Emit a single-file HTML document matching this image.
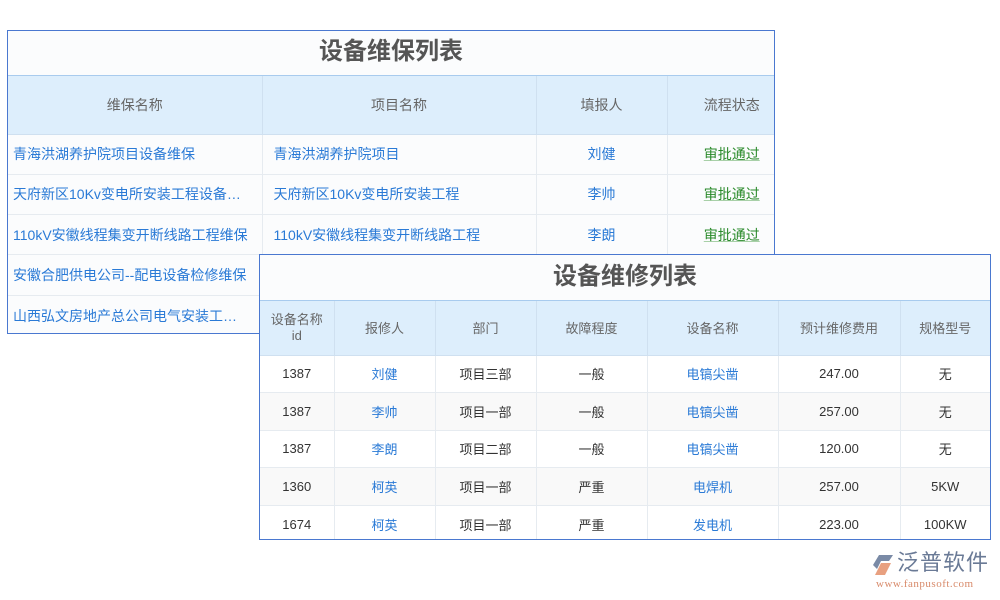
<!DOCTYPE html>
<html><head><meta charset="utf-8"><style>
*{margin:0;padding:0;box-sizing:border-box}
body{width:1000px;height:600px;background:#fff;position:relative;overflow:hidden;font-family:"Liberation Sans","Noto Sans CJK SC",sans-serif;font-size:14px}
.box{position:absolute;border:1px solid #4a78d0;background:#fbfcfd;overflow:hidden}
.title{position:absolute;left:0;right:0;text-align:center;font-weight:bold;color:#555;font-size:24px;border-bottom:1px solid #a8cbee}
table{position:absolute;left:0;border-collapse:collapse;table-layout:fixed}
td,th{border:1px solid #e6ebf0;white-space:nowrap;overflow:hidden;text-overflow:ellipsis}
th{background:#ddeefc;font-weight:normal;color:#666;border-color:#cfe0f0}
tr:first-child th{border-top:none}
td:first-child,th:first-child{border-left:none}
td:last-child,th:last-child{border-right:none}
tr:last-child td{border-bottom:none}
#t1 td{height:40.3px;background:#fbfcfd}
#t1 td:first-child,#t1 td:nth-child(2){padding-right:12px}
#t1 td:last-child,#t1 th:last-child{padding-left:22px;padding-right:0}
#t2 td{height:37.5px;text-align:center;color:#333;font-size:13px}
#t2 th{font-size:13px}
#t2 tr:nth-child(odd) td{background:#f9f9f9}
#t1 td.b,#t2 td.b{color:#2a7ad6}
.g{color:#2a8a2a;text-decoration:underline;text-decoration-color:#a8d0a8}
</style></head><body>
<div class="box" style="left:7px;top:30px;width:768px;height:304px">
<div class="title" style="top:0;height:45px;line-height:42px">设备维保列表</div>
<table id="t1" style="top:45px;width:766px">
<colgroup><col style="width:254px"><col style="width:274px"><col style="width:131px"><col style="width:107px"></colgroup>
<tr><th style="height:58px">维保名称</th><th>项目名称</th><th>填报人</th><th>流程状态</th></tr>
<tr><td class="b" style="padding-left:5px">青海洪湖养护院项目设备维保</td><td class="b" style="padding-left:11px">青海洪湖养护院项目</td><td class="b" style="text-align:center">刘健</td><td class="g" style="text-align:center">审批通过</td></tr>
<tr><td class="b" style="padding-left:5px">天府新区10Kv变电所安装工程设备维保</td><td class="b" style="padding-left:11px">天府新区10Kv变电所安装工程</td><td class="b" style="text-align:center">李帅</td><td class="g" style="text-align:center">审批通过</td></tr>
<tr><td class="b" style="padding-left:5px">110kV安徽线程集变开断线路工程维保</td><td class="b" style="padding-left:11px">110kV安徽线程集变开断线路工程</td><td class="b" style="text-align:center">李朗</td><td class="g" style="text-align:center">审批通过</td></tr>
<tr><td class="b" style="padding-left:5px">安徽合肥供电公司--配电设备检修维保</td><td></td><td></td><td></td></tr>
<tr><td class="b" style="padding-left:5px">山西弘文房地产总公司电气安装工程维保</td><td></td><td></td><td></td></tr>
</table></div>
<div class="box" style="left:259px;top:254px;width:732px;height:286px;background:#fff">
<div class="title" style="top:0;height:46px;line-height:44px;background:#fbfcfd">设备维修列表</div>
<table id="t2" style="top:46px;width:730px">
<colgroup><col style="width:74px"><col style="width:101px"><col style="width:101px"><col style="width:111px"><col style="width:131px"><col style="width:122px"><col style="width:90px"></colgroup>
<tr><th style="height:54px;white-space:normal;line-height:16px">设备名称<br>id</th><th>报修人</th><th>部门</th><th>故障程度</th><th>设备名称</th><th>预计维修费用</th><th>规格型号</th></tr>
<tr><td>1387</td><td class="b">刘健</td><td>项目三部</td><td>一般</td><td class="b">电镐尖凿</td><td>247.00</td><td>无</td></tr>
<tr><td>1387</td><td class="b">李帅</td><td>项目一部</td><td>一般</td><td class="b">电镐尖凿</td><td>257.00</td><td>无</td></tr>
<tr><td>1387</td><td class="b">李朗</td><td>项目二部</td><td>一般</td><td class="b">电镐尖凿</td><td>120.00</td><td>无</td></tr>
<tr><td>1360</td><td class="b">柯英</td><td>项目一部</td><td>严重</td><td class="b">电焊机</td><td>257.00</td><td>5KW</td></tr>
<tr><td>1674</td><td class="b">柯英</td><td>项目一部</td><td>严重</td><td class="b">发电机</td><td>223.00</td><td>100KW</td></tr>
</table></div>
<svg style="position:absolute;left:871px;top:553px" width="24" height="24" viewBox="0 0 24 24"><path d="M8 2L22 2L18 8L10 8L6 16L2 12Z" fill="#7a8aa6"/><path d="M10 10L20 10L14 22L4 22Z" fill="#e8a080"/></svg>
<div style="position:absolute;left:897px;top:550px;font-size:22px;color:#6a7a96;letter-spacing:1px;line-height:26px">泛普软件</div>
<div style="position:absolute;left:876px;top:578px;font-size:11px;color:#d88a6a;font-family:'Liberation Serif',serif;letter-spacing:0.5px">www.fanpusoft.com</div>
</body></html>
